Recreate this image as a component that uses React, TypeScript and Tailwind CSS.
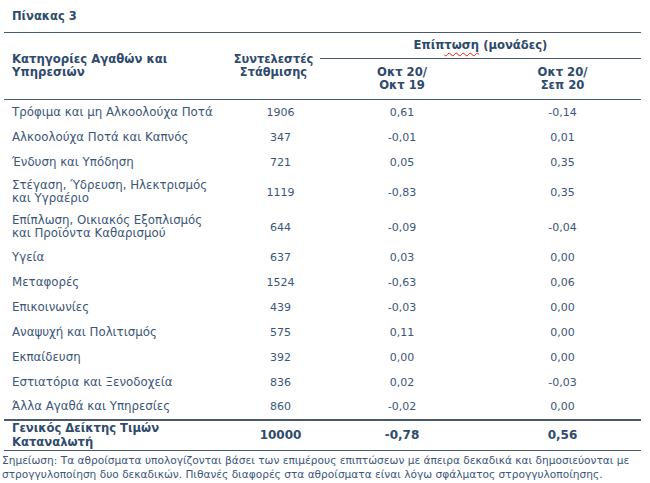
const rows: { label: string[]; weight: string; yoy: string; mom: string }[] = [
  { label: ['Τρόφιμα και μη Αλκοολούχα Ποτά'], weight: '1906', yoy: '0,61', mom: '-0,14' },
  { label: ['Αλκοολούχα Ποτά και Καπνός'], weight: '347', yoy: '-0,01', mom: '0,01' },
  { label: ['Ένδυση και Υπόδηση'], weight: '721', yoy: '0,05', mom: '0,35' },
  { label: ['Στέγαση, Ύδρευση, Ηλεκτρισμός', 'και Υγραέριο'], weight: '1119', yoy: '-0,83', mom: '0,35' },
  { label: ['Επίπλωση, Οικιακός Εξοπλισμός', 'και Προϊόντα Καθαρισμού'], weight: '644', yoy: '-0,09', mom: '-0,04' },
  { label: ['Υγεία'], weight: '637', yoy: '0,03', mom: '0,00' },
  { label: ['Μεταφορές'], weight: '1524', yoy: '-0,63', mom: '0,06' },
  { label: ['Επικοινωνίες'], weight: '439', yoy: '-0,03', mom: '0,00' },
  { label: ['Αναψυχή και Πολιτισμός'], weight: '575', yoy: '0,11', mom: '0,00' },
  { label: ['Εκπαίδευση'], weight: '392', yoy: '0,00', mom: '0,00' },
  { label: ['Εστιατόρια και Ξενοδοχεία'], weight: '836', yoy: '0,02', mom: '-0,03' },
  { label: ['Άλλα Αγαθά και Υπηρεσίες'], weight: '860', yoy: '-0,02', mom: '0,00' },
];

export default function App() {
  return (
    <div className="w-[650px] h-[483px] bg-white text-[#3b5679] font-['DejaVu_Sans',Verdana,sans-serif] text-[11px]">
      {/* Title */}
      <div className="h-[32px] pl-[12px] pt-[8px] font-bold text-[11.5px] text-[#2e4a6d]">Πίνακας 3</div>

      <table className="ml-[4px] w-[637px] table-fixed border-collapse">
        <colgroup>
          <col className="w-[221px]" />
          <col className="w-[95px]" />
          <col className="w-[164px]" />
          <col className="w-[157px]" />
        </colgroup>
        <thead className="font-bold text-[#2e4a6d] leading-[13px]">
          <tr className="h-[26px] border-t border-[#4a5a6c]">
            <th rowSpan={2} className="text-left align-middle pl-[8px] font-bold text-[11.7px] border-b border-[#4a5a6c]">
              Κατηγορίες Αγαθών και
              <br />
              Υπηρεσιών
            </th>
            <th rowSpan={2} className="text-center align-middle font-bold pl-[2px] text-[11.4px] border-b border-[#4a5a6c]">
              Συντελεστές
              <br />
              Στάθμισης
            </th>
            <th colSpan={2} className="text-center align-middle font-bold text-[11.6px] border-b border-[#4a5a6c]">
              Επίπ
              <span className="underline decoration-wavy decoration-[#e02020] decoration-[1px] underline-offset-[3px]">τωση</span>{' '}
              (μονάδες)
            </th>
          </tr>
          <tr className="h-[41px] border-b border-[#4a5a6c] text-[11.6px]">
            <th className="text-center align-middle font-bold">
              Οκτ 20/
              <br />
              Οκτ 19
            </th>
            <th className="text-center align-middle font-bold">
              Οκτ 20/
              <br />
              Σεπ 20
            </th>
          </tr>
        </thead>
        <tbody className="leading-[13px]">
          {rows.map((r) => (
            <tr key={r.label[0]} className={r.label.length > 1 ? 'h-[35px]' : 'h-[25px]'}>
              <td className="pl-[8px] align-middle text-[11.8px]">
                {r.label.map((l, i) => (
                  <div key={i}>{l}</div>
                ))}
              </td>
              <td className="text-center pl-[16px] align-middle">{r.weight}</td>
              <td className="text-center align-middle">{r.yoy}</td>
              <td className="text-center align-middle">{r.mom}</td>
            </tr>
          ))}
          <tr className="h-[31px] border-t-2 border-b border-[#4a5a6c] font-bold text-[#2e4a6d]">
            <td className="pl-[8px] align-middle leading-[14px] text-[11.6px]">
              Γενικός Δείκτης Τιμών
              <br />
              Καταναλωτή
            </td>
            <td className="text-center pl-[16px] align-middle text-[12px]">10000</td>
            <td className="text-center align-middle text-[12px]">-0,78</td>
            <td className="text-center align-middle text-[12px]">0,56</td>
          </tr>
        </tbody>
      </table>

      {/* Note */}
      <div className="ml-[2px] mt-[2px] text-[10.6px] leading-[14px]">
        <div>Σημείωση: Τα αθροίσματα υπολογίζονται βάσει των επιμέρους επιπτώσεων με άπειρα δεκαδικά και δημοσιεύονται με</div>
        <div>στρογγυλοποίηση δυο δεκαδικών. Πιθανές διαφορές στα αθροίσματα είναι λόγω σφάλματος στρογγυλοποίησης.</div>
      </div>
    </div>
  );
}
